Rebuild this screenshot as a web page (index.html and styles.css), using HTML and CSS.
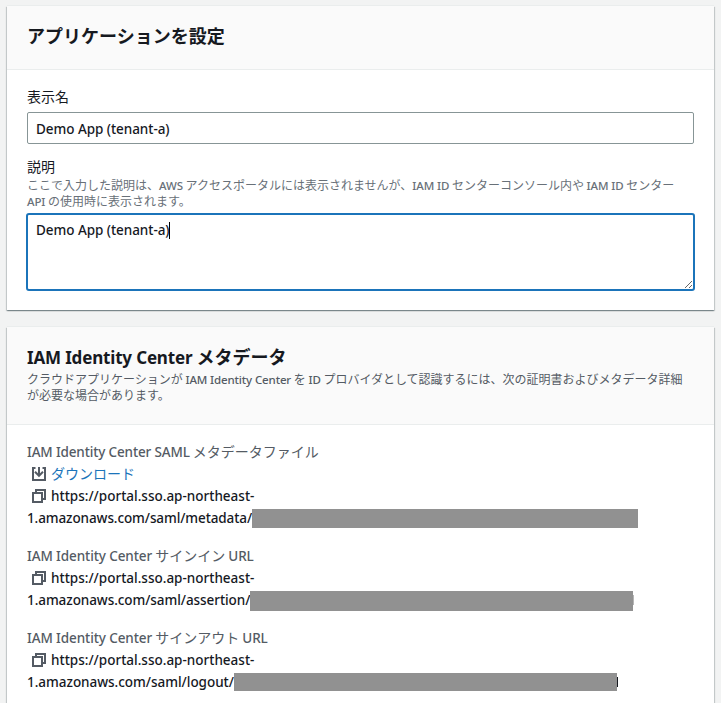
FILE: index.html
```html
<!DOCTYPE html>
<html lang="ja">
<head>
<meta charset="utf-8">
<title>アプリケーションを設定</title>
<link rel="stylesheet" href="styles.css">
</head>
<body>
<section class="card">
  <header class="card-header">
    <h2 class="title">アプリケーションを設定</h2>
  </header>
  <div class="form">
    <div class="label">表示名</div>
    <div class="input"><span class="en">Demo App (tenant-a)</span></div>
    <div class="label">説明</div>
    <div class="hint">ここで入力した説明は、<span class="en">AWS</span> アクセスポータルには表示されませんが、<span class="en">IAM ID</span> センターコンソール内や <span class="en">IAM ID</span> センター<br><span class="en">API</span> の使用時に表示されます。</div>
    <div class="textarea"><span class="en">Demo App (tenant-a)</span><span class="caret"></span></div>
  </div>
</section>
<section class="card card-meta">
  <header class="card-header">
    <h2 class="title"><span class="en">IAM Identity Center</span> メタデータ</h2>
    <p class="description">クラウドアプリケーションが <span class="en">IAM Identity Center</span> を <span class="en">ID</span> プロバイダとして認識するには、次の証明書およびメタデータ詳細<br>が必要な場合があります。</p>
  </header>
  <div class="details">
    <div class="item">
      <div class="key"><span class="en saml">IAM Identity Center SAML</span> メタデータファイル</div>
      <div class="row"><svg class="icon" viewBox="0 0 16 16"><path d="M4.500 2H2v12h12V2h-2.500M8 1v8.500M4 5.800l4 4 4-4"/></svg><a class="link">ダウンロード</a></div>
      <div class="row"><svg class="icon" viewBox="0 0 16 16"><path d="M2 5h9v9H2zM5 5V2h9v9h-3"/></svg><span class="en host">https://portal.sso.ap-northeast-</span></div>
      <div class="row"><span class="en">1.amazonaws.com/saml/metadata/</span><span class="mask mask-metadata"></span></div>
    </div>
    <div class="item">
      <div class="key"><span class="en">IAM Identity Center</span> サインイン <span class="en">URL</span></div>
      <div class="row"><svg class="icon" viewBox="0 0 16 16"><path d="M2 5h9v9H2zM5 5V2h9v9h-3"/></svg><span class="en host">https://portal.sso.ap-northeast-</span></div>
      <div class="row"><span class="en assertion">1.amazonaws.com/saml/assertion/</span><span class="mask mask-assertion"></span><span class="sliver pale"></span></div>
    </div>
    <div class="item">
      <div class="key"><span class="en">IAM Identity Center</span> サインアウト <span class="en">URL</span></div>
      <div class="row"><svg class="icon" viewBox="0 0 16 16"><path d="M2 5h9v9H2zM5 5V2h9v9h-3"/></svg><span class="en host">https://portal.sso.ap-northeast-</span></div>
      <div class="row"><span class="en logout">1.amazonaws.com/saml/logout/</span><span class="mask mask-logout"></span><span class="sliver"></span></div>
    </div>
  </div>
</section>
</body>
</html>
```
FILE: styles.css
```css
* { box-sizing: border-box; }
body {
  display: flex;
  flex-direction: column;
  margin: 0;
  padding: 6px 7px 0;
  height: 703px;
  overflow: hidden;
  background: #f2f3f3;
  color: #16191f;
  font: 14px/22px "Noto Sans CJK JP", sans-serif;
}
.card {
  flex: none;
  height: 304px;
  background: #fff;
  box-shadow: 0 1px 1px 0 rgba(0, 28, 36, .3), 1px 1px 1px 0 rgba(0, 28, 36, .15), -1px 1px 1px 0 rgba(0, 28, 36, .15), 0 -1px 0 0 #eaeded;
}
.card-meta { flex: 1; height: auto; min-height: 0; margin-top: 17px; }
.card-header {
  padding: 18px 20px 23px;
  background: #fafafa;
  border-bottom: 1px solid #eaeded;
}
.card-meta .card-header { padding-bottom: 21px; }
.title { margin: 0; font-size: 18px; line-height: 22px; font-weight: 700; white-space: nowrap; }
.description { margin: 4px 0 0; font-size: 12px; line-height: 16px; color: #545b64; white-space: nowrap; }
.form { padding: 15px 20px 0; }
.en { font-family: "Noto Sans", "Noto Sans CJK JP", sans-serif; font-size: 13.500px; font-weight: 500; letter-spacing: -.1px; line-height: 1; }
.title .en { font-size: 17px; font-weight: 700; letter-spacing: -.17px; }
.hint .en, .description .en { font-size: 11.500px; letter-spacing: -.13px; }
.input .en, .textarea .en { letter-spacing: -.05px; }
.label { height: 22px; white-space: nowrap; }
.input {
  height: 32px;
  margin: 5px 0 11px;
  padding: 4px 8px;
  border: 1px solid #879596;
  border-radius: 2px;
}
.hint { height: 32px; font-size: 12px; line-height: 16px; color: #687078; white-space: nowrap; }
.textarea {
  height: 78px;
  margin: 4px -1px 0;
  padding: 3px 8px;
  border: 2px solid #1b74ba;
  border-radius: 3px;
  overflow: hidden;
  resize: vertical;
}
.caret { display: inline-block; width: 1px; height: 17px; margin-left: -1px; background: #000; vertical-align: -4px; }
.details { padding: 15px 20px; }
.item { margin-bottom: 16px; }
.key { height: 23px; color: #545b64; white-space: nowrap; }
.item + .item { margin-top: -1px; }
.row { display: flex; align-items: center; height: 22px; white-space: nowrap; }
.row .en { line-height: 22px; }
.en.host { letter-spacing: 0; }
.en.saml { letter-spacing: -.15px; }
.en.assertion { letter-spacing: -.07px; }
.en.logout { letter-spacing: -.03px; }
.icon { flex: none; width: 16px; height: 16px; margin: 0 4px; fill: none; stroke: #545b64; stroke-width: 2; }
.link { margin-bottom: 2px; color: #1b74ba; }
.mask { flex: none; background: #919191; }
.mask-metadata { width: 386px; height: 19px; margin-top: 1px; }
.mask-assertion { width: 383px; height: 20px; margin-top: 2px; }
.mask-logout { width: 383px; height: 18px; }
.sliver { width: 1px; height: 10px; background: #16191f; }
.pale { background: #b5b5b5; }
```
